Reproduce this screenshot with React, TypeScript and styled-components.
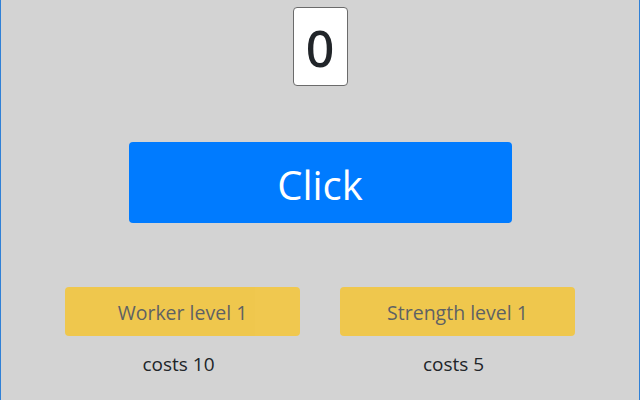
import React from "react";
import styled, { createGlobalStyle } from "styled-components";

const Global = createGlobalStyle`
  html, body { margin: 0; padding: 0; }
  body {
    background: #d3d3d3;
    font-family: "Open Sans", "Noto Sans", sans-serif;
    color: #212529;
  }
`;

const Page = styled.div`
  box-sizing: border-box;
  width: 640px;
  height: 400px;
  border-left: 1px solid #2f80d6;
  border-right: 1px solid #2f80d6;
  display: flex;
  flex-direction: column;
  align-items: center;
  padding-top: 7px;
`;

const Counter = styled.div`
  box-sizing: border-box;
  width: 55px;
  height: 79px;
  background: #ffffff;
  border: 1px solid #6b6b6b;
  border-radius: 4px;
  display: flex;
  align-items: center;
  justify-content: center;
  font-family: "Noto Sans", "Open Sans", sans-serif;
  font-size: 50px;
  font-weight: 500;
  line-height: 1;
  color: #212529;
  padding-top: 2px;
`;

const ClickButton = styled.button`
  box-sizing: border-box;
  margin-top: 56px;
  width: 383px;
  height: 81px;
  background: #007bff;
  border: none;
  border-radius: 4px;
  color: #ffffff;
  font-family: "Open Sans", "Noto Sans", sans-serif;
  font-size: 40px;
  line-height: 1;
  padding: 5px 0 0;
  cursor: pointer;
`;

const Upgrades = styled.div`
  margin-top: 64px;
  display: grid;
  grid-template-columns: 235px 235px;
  column-gap: 40px;
`;

const Upgrade = styled.div`
  display: flex;
  flex-direction: column;
  align-items: center;
`;

const UpgradeButton = styled.button`
  box-sizing: border-box;
  width: 235px;
  height: 49px;
  background: #ffc107;
  border: none;
  border-radius: 4px;
  color: #212529;
  opacity: 0.65;
  font-family: "Open Sans", "Noto Sans", sans-serif;
  font-size: 19.5px;
  line-height: 1;
  padding: 2px 0 0;
`;

const Cost = styled.div`
  margin-top: 16px;
  padding-right: 8px;
  font-size: 19px;
  line-height: 24px;
  color: #212529;
`;

export default function App() {
  const upgrades = [
    { name: "Worker", level: 1, cost: 10 },
    { name: "Strength", level: 1, cost: 5 },
  ];
  return (
    <>
      <Global />
      <Page>
        <Counter>0</Counter>
        <ClickButton>Click</ClickButton>
        <Upgrades>
          {upgrades.map((u) => (
            <Upgrade key={u.name}>
              <UpgradeButton disabled>
                {u.name} level {u.level}
              </UpgradeButton>
              <Cost>costs {u.cost}</Cost>
            </Upgrade>
          ))}
        </Upgrades>
      </Page>
    </>
  );
}
